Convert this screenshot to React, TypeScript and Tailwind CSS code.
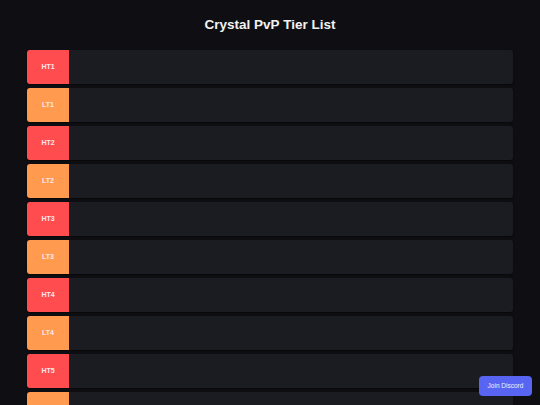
const TIERS = ["HT1", "LT1", "HT2", "LT2", "HT3", "LT3", "HT4", "LT4", "HT5", "LT5"];

export default function App() {
  return (
    <div
      className="min-h-screen bg-[#0f0f13] px-[27px] pb-8 text-white"
      style={{ fontFamily: '"Liberation Sans", Arial, sans-serif' }}
    >
      <h1 className="pt-[17px] pb-[17px] text-center text-[13.5px] font-bold leading-[16px] text-[#f2f2f2]">
        Crystal PvP Tier List
      </h1>
      <div className="flex flex-col gap-[4px]">
        {TIERS.map((t) => (
          <div key={t} className="flex h-[34px] overflow-hidden rounded-[3px] bg-[#1b1b22] shadow-[0_1px_2px_rgba(0,0,0,0.5)]">
            <div
              className={
                "flex w-[42px] shrink-0 items-center justify-center text-[7px] font-bold text-[#fbe9e9] " +
                (t.startsWith("HT") ? "bg-[#ff4d4f]" : "bg-[#ff9a4f]")
              }
            >
              {t}
            </div>
            <div className="flex-1" />
          </div>
        ))}
      </div>
      <button className="fixed right-[8px] bottom-[9px] h-[20px] w-[53px] rounded-[4px] bg-[#5865f2] text-[6.5px] text-[#eef0ff]">
        Join Discord
      </button>
    </div>
  );
}
